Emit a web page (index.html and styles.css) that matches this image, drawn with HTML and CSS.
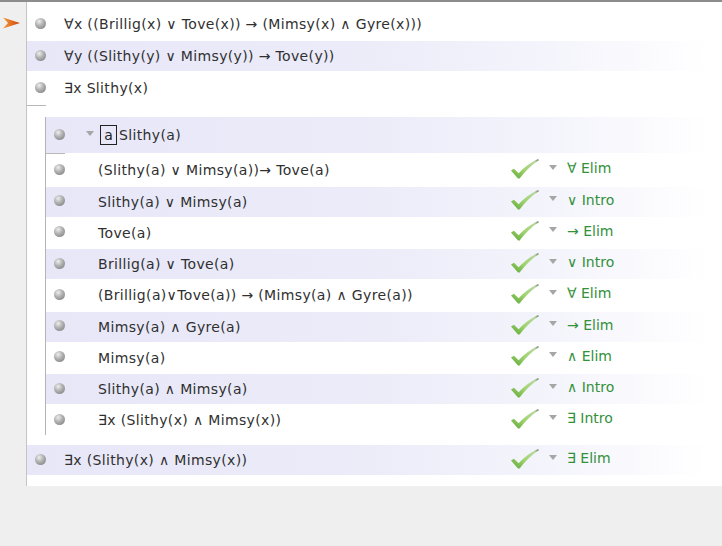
FILE: index.html
```html
<!DOCTYPE html>
<html>
<head>
<meta charset="utf-8">
<link rel="stylesheet" href="styles.css">
</head>
<body>
<svg class="defs" width="0" height="0">
  <defs>
    <linearGradient id="chkg" x1="0" y1="1" x2="1" y2="0">
      <stop offset="0" stop-color="#5aa636"/>
      <stop offset="0.45" stop-color="#a0d46e"/>
      <stop offset="0.85" stop-color="#b8d8a0"/>
      <stop offset="1" stop-color="#707a6a"/>
    </linearGradient>
    <linearGradient id="arrg" x1="0" y1="0" x2="1" y2="0">
      <stop offset="0" stop-color="#f59a3c"/>
      <stop offset="1" stop-color="#cc4506"/>
    </linearGradient>
    <symbol id="chk" viewBox="0 0 28 20">
      <path d="M0 11.5 L3 9.8 L7.6 14.2 C12.5 9 19 3.5 27 0 L28 1.2 C21 5.5 14 12 8.6 19.6 L7 19.6 Z" fill="url(#chkg)"/>
    </symbol>
  </defs>
</svg>
<div class="frame">
  <div class="gutter">
    <svg class="pointer" width="18" height="12" viewBox="0 0 18 12"><path d="M0 0.5 L17 6 L0 11.5 L5 6 Z" fill="url(#arrg)"/></svg>
  </div>
  <div class="panel">
    <div class="row"><span class="dot"></span><span class="f">∀x ((Brillig(x) ∨ Tove(x)) → (Mimsy(x) ∧ Gyre(x)))</span></div>
    <div class="row alt"><span class="dot"></span><span class="f">∀y ((Slithy(y) ∨ Mimsy(y)) → Tove(y))</span></div>
    <div class="row"><span class="dot"></span><span class="f">∃x Slithy(x)</span></div>
    <div class="bar"></div>
    <div class="sub">
      <div class="row head alt"><span class="dot"></span><span class="tri htri"></span><span class="var">a</span><span class="f">Slithy(a)</span></div>
      <div class="bar"></div>
      <div class="row step"><span class="dot"></span><span class="f">(Slithy(a) ∨ Mimsy(a))→ Tove(a)</span><span class="just"><svg class="check"><use href="#chk"/></svg><span class="tri"></span><span class="rule">∀ Elim</span></span></div>
      <div class="row step alt"><span class="dot"></span><span class="f">Slithy(a) ∨ Mimsy(a)</span><span class="just"><svg class="check"><use href="#chk"/></svg><span class="tri"></span><span class="rule">∨ Intro</span></span></div>
      <div class="row step"><span class="dot"></span><span class="f">Tove(a)</span><span class="just"><svg class="check"><use href="#chk"/></svg><span class="tri"></span><span class="rule">→ Elim</span></span></div>
      <div class="row step alt"><span class="dot"></span><span class="f">Brillig(a) ∨ Tove(a)</span><span class="just"><svg class="check"><use href="#chk"/></svg><span class="tri"></span><span class="rule">∨ Intro</span></span></div>
      <div class="row step"><span class="dot"></span><span class="f">(Brillig(a)∨Tove(a)) → (Mimsy(a) ∧ Gyre(a))</span><span class="just"><svg class="check"><use href="#chk"/></svg><span class="tri"></span><span class="rule">∀ Elim</span></span></div>
      <div class="row step alt"><span class="dot"></span><span class="f">Mimsy(a) ∧ Gyre(a)</span><span class="just"><svg class="check"><use href="#chk"/></svg><span class="tri"></span><span class="rule">→ Elim</span></span></div>
      <div class="row step"><span class="dot"></span><span class="f">Mimsy(a)</span><span class="just"><svg class="check"><use href="#chk"/></svg><span class="tri"></span><span class="rule">∧ Elim</span></span></div>
      <div class="row step alt"><span class="dot"></span><span class="f">Slithy(a) ∧ Mimsy(a)</span><span class="just"><svg class="check"><use href="#chk"/></svg><span class="tri"></span><span class="rule">∧ Intro</span></span></div>
      <div class="row step"><span class="dot"></span><span class="f">∃x (Slithy(x) ∧ Mimsy(x))</span><span class="just"><svg class="check"><use href="#chk"/></svg><span class="tri"></span><span class="rule">∃ Intro</span></span></div>
    </div>
    <div class="row alt last"><span class="dot"></span><span class="f">∃x (Slithy(x) ∧ Mimsy(x))</span><span class="just"><svg class="check"><use href="#chk"/></svg><span class="tri"></span><span class="rule">∃ Elim</span></span></div>
  </div>
</div>
</body>
</html>
```

FILE: styles.css
```css
html, body {
  margin: 0;
  padding: 0;
}
body {
  background: #efefef;
  border-top: 2px solid #8c8c8c;
  font-family: "DejaVu Sans", "Liberation Sans", sans-serif;
  font-size: 14px;
  color: #303030;
  height: 544px;
  overflow: hidden;
}
.defs {
  position: absolute;
  width: 0;
  height: 0;
}
.frame {
  display: flex;
  align-items: flex-start;
}
.gutter {
  width: 26px;
  flex: none;
  padding-top: 15px;
  box-sizing: border-box;
}
.pointer {
  display: block;
  margin-left: 3px;
}
.panel {
  flex: 1;
  background: #ffffff;
  border-left: 1px solid #c4c4c4;
  padding: 7px 0 11px 0;
}
.row {
  display: flex;
  align-items: center;
  height: 30px;
  padding-left: 8px;
  margin-bottom: 2px;
}
.row.alt {
  background: linear-gradient(to right, #e7e7f8 0%, #ebebf9 45%, #f4f4fc 75%, #ffffff 98%);
}
.dot {
  flex: none;
  width: 11px;
  height: 11px;
  border-radius: 50%;
  background: radial-gradient(circle at 38% 32%, #eeeeee 0%, #b4b4b4 40%, #8a8a8a 80%, #767676 100%);
  margin-right: 18px;
  margin-top: -2px;
}
.f {
  white-space: nowrap;
  letter-spacing: 0.35px;
}
.bar {
  width: 19px;
  height: 1px;
  background: #b8b8b8;
}
.sub {
  margin-left: 18px;
  margin-top: 11px;
  border-left: 1px solid #b4b4b4;
}
.sub .row {
  margin-bottom: 0;
}
.row.head {
  height: 36px;
}
.row.step {
  margin-top: 1.25px;
}
.row.step .dot {
  margin-right: 33px;
}
.tri {
  flex: none;
  width: 0;
  height: 0;
  border-left: 4px solid transparent;
  border-right: 4px solid transparent;
  border-top: 5px solid #a6a6a6;
}
.htri {
  margin-left: 3px;
  margin-right: 6px;
  margin-top: -4px;
}
.var {
  flex: none;
  box-sizing: border-box;
  width: 17px;
  height: 20px;
  border: 1px solid #222;
  display: flex;
  align-items: center;
  justify-content: center;
  margin-right: 2px;
  color: #222;
}
.just {
  margin-left: auto;
  width: 211px;
  flex: none;
  display: flex;
  align-items: center;
}
.check {
  width: 28px;
  height: 20px;
  margin-top: -3px;
  flex: none;
}
.just .tri {
  margin-left: 10px;
  margin-top: -6px;
}
.rule {
  margin-left: 10px;
  color: #33913a;
  white-space: nowrap;
  margin-top: -4px;
}
.row.last {
  margin-top: 10px;
  margin-bottom: 0;
}
```
